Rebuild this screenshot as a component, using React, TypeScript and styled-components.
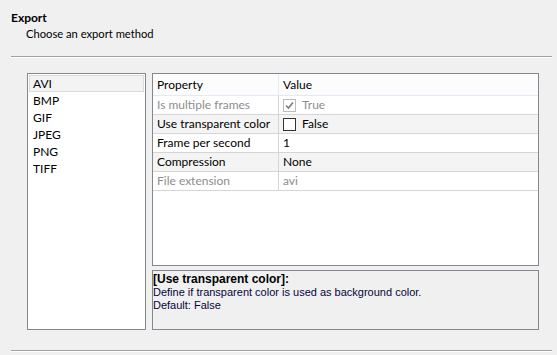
import React from "react";
import styled, { createGlobalStyle } from "styled-components";

const Global = createGlobalStyle`
  html, body { margin: 0; padding: 0; background: #f0f0f0; }
  body { font-family: Lato, "Open Sans", sans-serif; font-size: 12px; color: #000; }
`;

const Page = styled.div`
  width: 557px;
  height: 355px;
  box-sizing: border-box;
  padding: 10px 5px 0 11px;
  display: flex;
  flex-direction: column;
`;

const Title = styled.div`
  font-weight: 700;
  font-size: 12px;
  line-height: 16px;
`;

const Subtitle = styled.div`
  padding-left: 15px;
  font-size: 11.2px;
  line-height: 16px;
`;

const Etched = styled.div<{ $top: number }>`
  margin-top: ${(p) => p.$top}px;
  width: 541px;
  height: 1px;
  background: #a0a0a0;
  border-bottom: 1px solid #ffffff;
`;

const Body = styled.div`
  display: flex;
  gap: 6px;
  margin-top: 15px;
  padding-left: 16px;
  height: 257px;
`;

const ListBox = styled.div`
  width: 119px;
  box-sizing: border-box;
  background: #fff;
  border: 1px solid #828790;
  padding: 1px;
  display: flex;
  flex-direction: column;
`;

const ListItem = styled.div<{ $selected?: boolean }>`
  height: 17px;
  line-height: 16px;
  padding-left: 3px;
  box-sizing: border-box;
  border: 1px solid ${(p) => (p.$selected ? "#dadada" : "transparent")};
  background: ${(p) => (p.$selected ? "#f3f3f3" : "transparent")};
`;

const RightCol = styled.div`
  width: 387px;
  display: flex;
  flex-direction: column;
  gap: 4px;
`;

const Grid = styled.div`
  height: 193px;
  box-sizing: border-box;
  background: #fff;
  border: 1px solid #828790;
  display: flex;
  flex-direction: column;
`;

const Row = styled.div<{ $alt?: boolean; $header?: boolean }>`
  display: grid;
  grid-template-columns: 126px 1fr;
  height: ${(p) => (p.$header ? 22 : 19)}px;
  box-sizing: border-box;
  background: ${(p) => (p.$header ? "#fcfcfc" : p.$alt ? "#f4f4f4" : "#ffffff")};
  border-bottom: 1px solid ${(p) => (p.$header ? "#e3e9f5" : "#d5d5d5")};
`;

const Cell = styled.div<{ $dim?: boolean; $first?: boolean; $header?: boolean }>`
  display: flex;
  align-items: center;
  gap: 6px;
  padding-left: ${(p) => (p.$first ? 4 : 4)}px;
  color: ${(p) => (p.$dim ? "#8d8d8d" : "#000")};
  border-right: ${(p) => (p.$first ? `1px solid ${p.$header ? "#e3e9f5" : "#d5d5d5"}` : "none")};
  white-space: nowrap;
  line-height: 16px;
`;

const Box = styled.span<{ $disabled?: boolean }>`
  width: 11px;
  height: 11px;
  border: 1px solid ${(p) => (p.$disabled ? "#bcbcbc" : "#333")};
  background: #fff;
  display: inline-flex;
  align-items: center;
  justify-content: center;
  flex: none;
`;

const Desc = styled.div`
  flex: 1;
  box-sizing: border-box;
  border: 1px solid #828790;
  background: #f0f0f0;
  padding: 2px 0 0 0;
  font-family: "Liberation Sans", Arial, sans-serif;
  font-size: 11px;
  line-height: 12.5px;
  color: #06063a;
`;

const DescTitle = styled.div`
  font-weight: 700;
  font-size: 12px;
  color: #000;
  line-height: 13px;
`;

type Prop = { name: string; value: string; dim?: boolean; check?: "on" | "off" };

const props: Prop[] = [
  { name: "Is multiple frames", value: "True", dim: true, check: "on" },
  { name: "Use transparent color", value: "False", check: "off" },
  { name: "Frame per second", value: "1" },
  { name: "Compression", value: "None" },
  { name: "File extension", value: "avi", dim: true },
];

const formats = ["AVI", "BMP", "GIF", "JPEG", "PNG", "TIFF"];

export default function App() {
  return (
    <>
      <Global />
      <Page>
        <Title>Export</Title>
        <Subtitle>Choose an export method</Subtitle>
        <Etched $top={14} />
        <Body>
          <ListBox>
            {formats.map((f, i) => (
              <ListItem key={f} $selected={i === 0}>
                {f}
              </ListItem>
            ))}
          </ListBox>
          <RightCol>
            <Grid>
              <Row $header>
                <Cell $first $header>Property</Cell>
                <Cell>Value</Cell>
              </Row>
              {props.map((p, i) => (
                <Row key={p.name} $alt={i % 2 === 1}>
                  <Cell $first $dim={p.dim}>{p.name}</Cell>
                  <Cell $dim={p.dim}>
                    {p.check && (
                      <Box $disabled={p.dim}>
                        {p.check === "on" && (
                          <svg width="9" height="9" viewBox="0 0 9 9">
                            <path d="M1 4.5 L3.5 7 L8 1.5" fill="none" stroke="#7a7a7a" strokeWidth="1.6" />
                          </svg>
                        )}
                      </Box>
                    )}
                    {p.value}
                  </Cell>
                </Row>
              ))}
            </Grid>
            <Desc>
              <DescTitle>[Use transparent color]:</DescTitle>
              <div>Define if transparent color is used as background color.</div>
              <div>Default: False</div>
            </Desc>
          </RightCol>
        </Body>
        <Etched $top={20} />
      </Page>
    </>
  );
}
